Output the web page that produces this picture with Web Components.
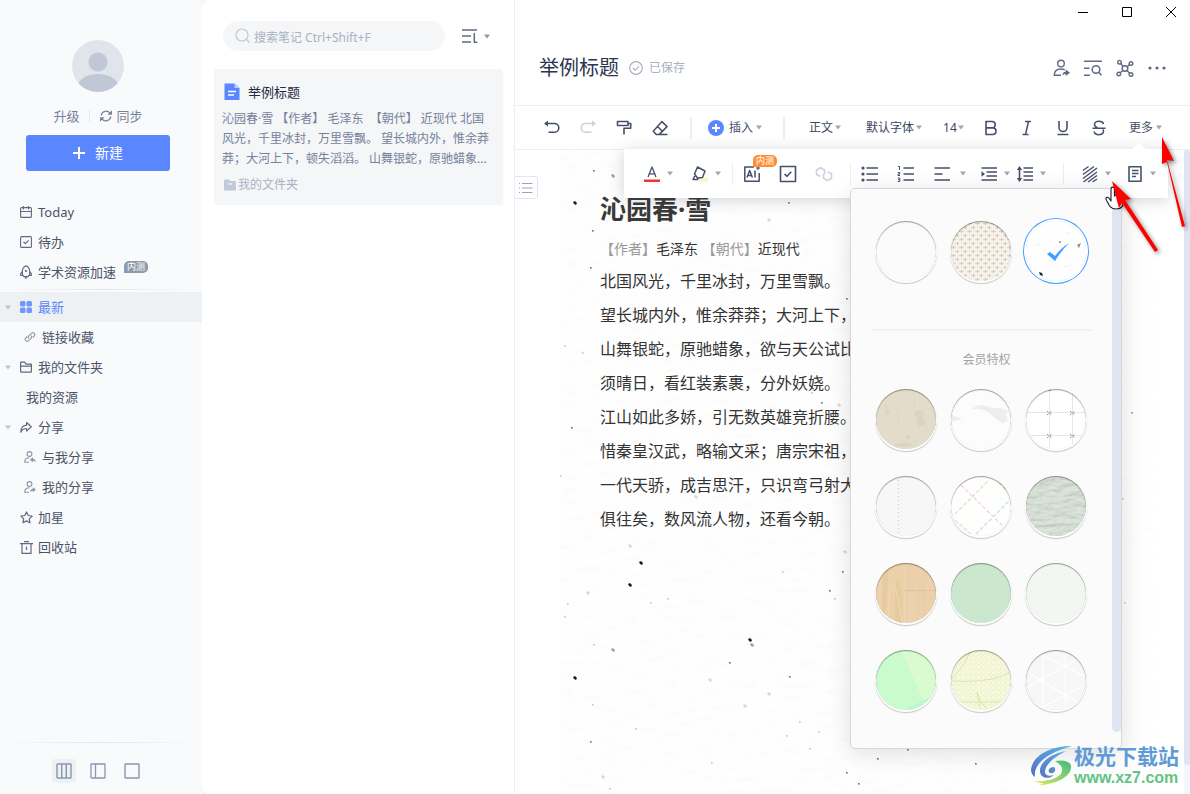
<!DOCTYPE html>
<html lang="zh-CN">
<head>
<meta charset="utf-8">
<title>举例标题</title>
<style>
  html, body { margin: 0; height: 100%; }
  body {
    font: 13px/20px "Noto Sans", "Noto Sans CJK SC", sans-serif;
    color: #4a5468;
    overflow: hidden;
  }
</style>
</head>
<body>
<note-app></note-app>

<script>
const BASE = `<style>
  *, *::before { box-sizing: border-box; }
  button, input, select { font: inherit; color: inherit; background: none; border: 0; padding: 0; margin: 0; outline: 0; }
  button, select { cursor: pointer; appearance: none; }
  button { display: flex; align-items: center; justify-content: center; }
  a { color: inherit; text-decoration: none; }
  h1, h2, p, ul { margin: 0; padding: 0; font-weight: inherit; font-size: inherit; list-style: none; }
</style>`;

function define(name, markup, setup) {
  const template = document.createElement('template');
  template.innerHTML = BASE + markup;
  customElements.define(name, class extends HTMLElement {
    constructor() {
      super();
      this.attachShadow({ mode: 'open' }).append(template.content.cloneNode(true));
    }
    connectedCallback() { if (setup) setup(this, this.shadowRoot); }
  });
}

/* ---------- icons: [width, height, shapes] ---------- */
const line = (w, body) => `<g fill="none" stroke="currentColor" stroke-width="${w}" stroke-linejoin="round">${body}</g>`;
const ICONS = {
  caret: [6, 5, '<path fill="currentColor" d="M0 0.5h6L3 4.5z"/>'],
  plus: [12, 12, line(2, '<path d="M6 0v12M0 6h12"/>')],
  sync: [14, 14, line(1.3, '<path d="M2.200 6.500A4.900 4.900 0 0 1 11 4.200M11.800 7.500A4.900 4.900 0 0 1 3 9.800"/>') + '<path fill="currentColor" d="M8.500 5.800h4.500V1.300zM5.500 8.200H1v4.500z"/>'],
  calendar: [12, 12, line(1.1, '<rect x=".6" y="1.6" width="10.800" height="9.800" rx="1"/><path d="M.6 5.500h10.800M3.500 0v3.500M8.500 0v3.500"/>')],
  todo: [12, 12, line(1.1, '<rect x=".6" y=".6" width="10.800" height="10.800" rx="1"/><path d="M3.500 6l1.800 1.700L8.700 4.300"/>')],
  rocket: [12, 14, line(1.2, '<path d="M6 .8C3.500 2 2.300 4 2.300 6.500v3L4 11.700h4l1.700-2.200v-3C9.700 4 8.500 2 6 .8zM2.300 6.500L.7 8.500v2h2.300M9.700 6.500l1.600 2v2H9M4.700 13h2.600"/>') + '<circle cx="6" cy="6" r="1.100" fill="currentColor"/>'],
  grid: [12, 12, '<g fill="currentColor"><rect width="5.500" height="5.500" rx="1.500"/><rect x="6.500" width="5.500" height="5.500" rx="1.500"/><rect y="6.500" width="5.500" height="5.500" rx="1.500"/><rect x="6.500" y="6.500" width="5.500" height="5.500" rx="1.500"/></g>'],
  link: [12, 12, line(1.1, '<path d="M5 7.500a2 2 0 0 1 0-2.800l2.600-2.600a2 2 0 0 1 2.800 2.800L8.800 6.500M7 4.500a2 2 0 0 1 0 2.800L4.400 9.900a2 2 0 0 1-2.800-2.800L3.200 5.500"/>')],
  folder: [12, 12, line(1.2, '<path d="M.6 10.400V1.200h4l1.400 2h5.400v7.200c0 .5-.3.800-.8.800H1.400c-.5 0-.8-.3-.8-.8zM1 5.200h10"/>')],
  share: [12, 12, line(1.2, '<path d="M.8 11.200C.8 6.500 3.500 4.200 6.600 4.200V1.500l4.700 4.300-4.700 4.300V7.500C4.200 7.500 2 8.600.8 11.200z"/>')],
  personIn: [12, 12, line(1.1, '<circle cx="5.500" cy="3" r="2.400"/><path d="M5 11.300H.7C.7 8.600 2.500 6.800 5.500 6.800"/>') + '<path fill="currentColor" d="M9 6.200L5.800 8.700 9 11.200V9.700c1.200 0 2 .5 2.800 1.600-.1-2-1.100-3.300-2.800-3.500z"/>'],
  personOut: [12, 12, line(1.1, '<circle cx="5.500" cy="3" r="2.400"/><path d="M5 11.300H.7C.7 8.600 2.500 6.800 5.500 6.800"/>') + '<path fill="currentColor" d="M8.800 6.200L12 8.700l-3.200 2.500V9.700c-1.200 0-2 .5-2.800 1.600.1-2 1.100-3.300 2.800-3.500z"/>'],
  star: [13, 13, line(1.2, '<path d="M6.500.9l1.700 3.600 3.900.5-2.800 2.800.7 4-3.500-1.900-3.500 1.900.7-4L.9 5l3.900-.5z"/>')],
  trash: [13, 13, line(1.2, '<path d="M0 2.600h13M4 .6h5M2 2.600v9.800h9V2.600M6.500 5.500v3.500"/>')],
  cols3: [16, 16, line(1.4, '<rect x="1" y="1" width="14" height="14" rx=".5"/><path d="M5.700 1v14M10.300 1v14"/>')],
  cols2: [16, 16, line(1.3, '<rect x="1" y="1" width="14" height="14" rx=".5"/><path d="M5.500 1v14"/>')],
  cols1: [16, 16, line(1.4, '<rect x="1" y="1" width="14" height="14" rx=".5"/>')],
  search: [16, 16, line(1.2, '<circle cx="7" cy="7" r="6"/><path d="M11.500 11.500l3 3"/>')],
  sort: [16, 14, line(1.5, '<path d="M0 1h15M0 7h9M0 13h9M12.300 4v9.200h3"/>')],
  doc: [16, 18, '<path fill="#5a86ff" d="M0.500 0.500h10L15.500 5v12h-15z"/><path fill="#b9cbff" d="M10.500.5V5h5z"/><path stroke="#fff" stroke-width="1.400" d="M4 8.500h8M4 12h6"/>'],
  folderFill: [12, 12, '<path fill="currentColor" d="M1 .5h4L6 2h5a1 1 0 0 1 1 1v7.500a1 1 0 0 1-1 1H1a1 1 0 0 1-1-1v-9a1 1 0 0 1 1-1z"/><path stroke="#fff" d="M4 5h4"/>'],
  check: [14, 14, line(1.2, '<circle cx="7" cy="7" r="6.300"/><path d="M4 7l2.300 2.200L10 5.400"/>')],
  min: [12, 12, '<path stroke="#000" d="M1 6.500h10"/>'],
  max: [12, 12, '<path fill="none" stroke="#000" d="M1.500 1.500h9v9h-9z"/>'],
  close: [12, 12, '<path fill="none" stroke="#000" d="M1 1l10 10M11 1L1 11"/>'],
  shareUser: [20, 20, line(1.4, '<circle cx="10" cy="5.500" r="3.300"/><path d="M10 17.300H3.200c0-4 2.800-6.300 6.800-6.300 1.500 0 2.800.2 3.800 1"/>') + '<path fill="currentColor" d="M14.800 11.400l4.200 3.300-4.200 3.300v-2c-1.500 0-2.700.6-3.500 2 .1-2.800 1.300-4.300 3.500-4.600z"/>'],
  find: [20, 20, line(1.5, '<path d="M1 3.200h18M1 10.200h5.500M1 17.200h6"/><circle cx="13" cy="11.500" r="3.800"/><path d="M15.800 14.300l2.700 3"/>')],
  graph: [20, 20, line(1.4, '<circle cx="10" cy="10.500" r="2.800"/><circle cx="4.500" cy="4.200" r="1.800"/><circle cx="16" cy="5.500" r="1.800"/><circle cx="3.800" cy="16" r="1.800"/><circle cx="16" cy="16.500" r="1.800"/><path d="M5.700 5.500L8 8.400M14.400 6.600L12.300 8.700M5.200 14.700L7.800 12.400M14.600 15.200L12 12.400"/>')],
  dots: [20, 20, '<g fill="currentColor"><circle cx="3" cy="10" r="1.600"/><circle cx="10" cy="10" r="1.600"/><circle cx="17" cy="10" r="1.600"/></g>'],
  undo: [18, 18, line(1.5, '<path d="M3 4.500h8.500a4.300 4.300 0 0 1 0 8.700H5.500"/>') + '<path fill="currentColor" d="M1 4.500L5 1.500v6z"/>'],
  redo: [18, 18, line(1.5, '<path d="M15 4.500H6.500a4.300 4.300 0 0 0 0 8.700h6"/>') + '<path fill="currentColor" d="M17 4.500L13 1.500v6z"/>'],
  roller: [18, 18, line(1.6, '<path d="M2.500 2.500h10.500v4H2.500zM13 4.500h2.700v4.700H9V15.500"/>')],
  eraser: [18, 18, line(1.5, '<path d="M11 2.600l5 5-8 8H5.500l-3.300-3.300zM6.300 7.300l5 5M7 15.500h9.500"/>')],
  insert: [16, 16, '<circle cx="8" cy="8" r="8" fill="#5a86ff"/><path stroke="#fff" stroke-width="2" d="M8 4v8M4 8h8"/>'],
  bold: [18, 18, line(1.6, '<path d="M4 2.500h6a3.200 3.200 0 0 1 0 6.400H4zM4 8.900h6.700a3.300 3.300 0 0 1 0 6.600H4z"/>')],
  italic: [18, 18, line(1.5, '<path d="M7 2.500h6M4.500 15.500h6M10.500 2.500l-3 13"/>')],
  underline: [18, 18, line(1.6, '<path d="M5 2v6.500a4 4 0 0 0 8 0V2M3.500 15.500h11"/>')],
  strike: [18, 18, line(1.6, '<path d="M13.500 5C13 3.300 11.500 2.300 9 2.300S4.500 3.500 4.500 5.500c0 1.500 1 2.500 3 3.200M13 10.500c1.600 2.500-.3 5.200-4 5.200-2.800 0-4.600-1.200-4.800-3.200M2.500 9.200h13"/>')],
  color: [18, 18, line(1.3, '<path d="M5 12L9 2l4 10M6.400 8.800h5.200"/>') + '<path fill="#f03434" d="M1 14.500h16V17H1z"/>'],
  highlight: [18, 18, '<path fill="#fff0c4" d="M7 13h10v3.500H7z"/>' + line(1.5, '<path d="M6.500 2l7.500 4-2.500 6.500-5 .5L3.500 9zM4.500 9.500L2 14.500h4.500l1-2"/>')],
  ai: [18, 18, line(1.5, '<path d="M11 2H1.800v14.200h14.400V8M4 12.500l2.700-7 2.700 7M5 10.500h3.500M12 5.500v7"/>') + '<path stroke="currentColor" stroke-width="1.200" d="M15 1v4M13 3h4"/>'],
  checkbox: [18, 18, line(1.6, '<rect x="1.500" y="1.500" width="15" height="15"/><path d="M5.500 9l2.500 2.300 4.300-4.500"/>')],
  chain: [18, 18, line(1.6, '<path d="M5.500 11.300L1.500 9.500V5l4-2.200 4 2.200v4.500M12.500 6.800l4 2v4.500l-4 2.200-4-2.200V8.500"/>')],
  bullets: [18, 18, '<g fill="currentColor"><circle cx="2" cy="3" r="1.600"/><circle cx="2" cy="9" r="1.600"/><circle cx="2" cy="15" r="1.600"/></g>' + line(1.6, '<path d="M5.500 3H17M5.500 9H17M5.500 15H17"/>')],
  numbers: [18, 18, line(1.6, '<path d="M6.500 3H17M6.500 9H17M6.500 15H17"/>') + line(1, '<path d="M1 1.500h1.500V5M.8 7.500h2v1.500H1v1.500h2M.8 13h2v3.500h-2M1 14.700h1.500"/>')],
  align: [18, 18, line(1.6, '<path d="M1.500 3H17M1.500 9H9.500M1.500 15H17"/>')],
  indent: [18, 18, line(1.6, '<path d="M1.500 3H17M6.500 7H17M6.500 11H17M1.500 15H17"/>') + '<path fill="currentColor" d="M1.500 6.300v5.400L5 9z"/>'],
  lineHeight: [18, 18, line(1.6, '<path d="M7.500 3H17M7.500 7H17M7.500 11H17M7.500 15H17M3.500 3v12"/>') + '<path fill="currentColor" d="M3.500 1L.8 5h5.400zM3.500 17L.8 13h5.400z"/>'],
  hatch: [18, 18, line(1.4, '<path d="M2 5.500L7.500 1.500M2 9.500L13 1.500M2 13.500L16 3M2.500 17L16 7M7 17L16 10.500M11.500 17L16 14"/>')],
  page: [18, 18, line(1.6, '<path d="M3 1.800h12v14.400H3zM6 5.500h6.500M6 8.500h6.500M6 11.500h4"/>')],
  outline: [14, 12, line(1, '<path d="M3 1.500h10.500M3 6h10.500M3 10.500h10.500M0 1.500h1M0 6h1M0 10.500h1"/>')]
};
define('ui-icon', `<style>
  :host { display: inline-flex; flex: none; }
  svg { display: block; }
</style><svg aria-hidden="true"></svg>`, (host, root) => {
  const [w, h, body] = ICONS[host.getAttribute('name')];
  const svg = root.querySelector('svg');
  svg.setAttribute('width', w);
  svg.setAttribute('height', h);
  svg.setAttribute('viewBox', `0 0 ${w} ${h}`);
  svg.innerHTML = body;
});

/* ---------- sidebar ---------- */
define('nav-item', `<style>
  :host { display: block; }
  a { display: flex; align-items: center; height: 30px; padding-left: 5px; }
  .fold { width: 6px; margin-right: 9px; color: #bcc4d3; display: flex; }
  .icon { color: #5f6a80; width: 13px; display: flex; margin-right: 5px; }
  .icon:empty { display: none; }
  :host([child]) a { padding-left: 9px; }
  :host([child]) .icon { color: #8e97a8; }
  :host([plain]) .fold { margin-right: 15px; }
  :host([active]) { background: #eef1f4; color: #5a86ff; }
  :host([active]) .icon { color: #6f97ff; }
</style>
<a href="#"><span class="fold"></span><span class="icon"></span><slot></slot></a>`, (host, root) => {
  const put = (cls, name) => root.querySelector(cls).innerHTML = `<ui-icon name="${name}"></ui-icon>`;
  if (host.hasAttribute('fold')) put('.fold', 'caret');
  if (host.hasAttribute('icon')) put('.icon', host.getAttribute('icon'));
});

define('beta-badge', `<style>
  :host { display: block; padding: 0 3px; font-size: 9px; line-height: 12px; color: #fff;
          background: var(--badge, #8f99ac); border-radius: 5px 5px 5px 0; }
</style><slot></slot>`);

define('side-bar', `<style>
  :host { display: flex; flex-direction: column; background: #f9fafc; min-height: 0; }
  .user { padding: 40px 32px 0 26px; display: flex; flex-direction: column; }
  .avatar { align-self: center; }
  .links { display: flex; justify-content: center; align-items: center; color: #76819a; margin: 14px 0 9px; }
  .links a { display: flex; align-items: center; gap: 4px; }
  .links i { width: 1px; height: 12px; background: #e4e7ed; margin: 0 9px; }
  .new { height: 36px; background: #5a86ff; color: #fff; border-radius: 3px; font-size: 14px; gap: 10px; }
  nav { padding-top: 26px; }
  hr { border: 0; height: 1px; margin: 2px 0; background: linear-gradient(90deg, #f9fafc, #e1e5ee 50%, #f9fafc); }
  beta-badge { margin: 0 0 11px 8px; }
  .views { margin-top: auto; }
  .views div { display: flex; gap: 10px; padding: 14px 0 11px 52px; }
  .views button { width: 24px; height: 24px; border-radius: 3px; color: #8b96ae; }
  .views .on { background: #eef1f4; }
</style>
<div class="user">
  <svg class="avatar" width="52" height="52" viewBox="0 0 52 52" role="img" aria-label="头像">
    <defs><clipPath id="c"><circle cx="26" cy="26" r="26"/></clipPath></defs>
    <g clip-path="url(#c)"><path fill="#e0e4eb" d="M0 0h52v52H0z"/><circle cx="26" cy="22" r="9.500" fill="#c0c7d5"/><path fill="#c0c7d5" d="M6 44c3-6.500 11-10 20-10s17 3.500 20 10v9H6z"/></g>
  </svg>
  <div class="links"><a href="#">升级</a><i></i><a href="#"><ui-icon name="sync"></ui-icon>同步</a></div>
  <button class="new"><ui-icon name="plus"></ui-icon>新建</button>
</div>
<nav>
  <nav-item icon="calendar">Today</nav-item>
  <nav-item icon="todo">待办</nav-item>
  <nav-item icon="rocket">学术资源加速<beta-badge>内测</beta-badge></nav-item>
  <hr>
  <nav-item icon="grid" fold active>最新</nav-item>
  <nav-item icon="link" child>链接收藏</nav-item>
  <nav-item icon="folder" fold>我的文件夹</nav-item>
  <nav-item plain>我的资源</nav-item>
  <nav-item icon="share" fold>分享</nav-item>
  <nav-item icon="personIn" child>与我分享</nav-item>
  <nav-item icon="personOut" child>我的分享</nav-item>
  <nav-item icon="star">加星</nav-item>
  <nav-item icon="trash">回收站</nav-item>
</nav>
<div class="views"><hr><div>
  <button class="on" aria-label="三栏"><ui-icon name="cols3"></ui-icon></button>
  <button aria-label="两栏"><ui-icon name="cols2"></ui-icon></button>
  <button aria-label="单栏"><ui-icon name="cols1"></ui-icon></button>
</div></div>`);

/* ---------- note list ---------- */
define('note-card', `<style>
  :host { display: block; background: #f4f6f8; border-radius: 3px; padding: 13px 8px 10px; }
  h2 { display: flex; align-items: center; gap: 8px; height: 20px; padding-left: 2px; color: #1f2a44; }
  p { margin: 7px 0 6px; font-size: 12px; color: #76819a; }
  footer { display: flex; align-items: center; gap: 2px; font-size: 12px; color: #a9b1c2; padding-left: 2px; }
  ui-icon[name=folderFill] { color: #c2c9d8; }
</style>
<article>
  <h2><ui-icon name="doc"></ui-icon><slot name="title"></slot></h2>
  <p><slot></slot></p>
  <footer><ui-icon name="folderFill"></ui-icon><slot name="folder"></slot></footer>
</article>`);

define('note-list', `<style>
  :host { display: block; background: #fff; border-radius: 8px 0 0 8px; border-right: 1px solid #eceff5; padding: 21px 11px 0 12px; }
  header { display: flex; align-items: center; padding: 0 13px 0 9px; margin-bottom: 18px; }
  .search { display: flex; align-items: center; gap: 3px; flex: 1; min-width: 0; height: 30px; padding: 0 12px; background: #f4f6f8; border-radius: 15px; color: #c0c7d5; }
  input { flex: 1; min-width: 0; font-size: 12px; height: 22px; padding-top: 2px; }
  input::placeholder { color: #a9b1c2; opacity: 1; }
  .sort { gap: 6px; margin-left: 17px; color: #5f6a85; }
  .sort ui-icon + ui-icon { color: #8e97a8; }
</style>
<header>
  <label class="search"><ui-icon name="search"></ui-icon><input type="search" aria-label="搜索笔记" placeholder="搜索笔记 Ctrl+Shift+F"></label>
  <button class="sort" aria-label="排序"><ui-icon name="sort"></ui-icon><ui-icon name="caret"></ui-icon></button>
</header>
<note-card>
  <span slot="title">举例标题</span>
  沁园春·雪 【作者】 毛泽东 &nbsp;【朝代】 近现代 北国风光，千里冰封，万里雪飘。 望长城内外，惟余莽莽；大河上下，顿失滔滔。 山舞银蛇，原驰蜡象...
  <span slot="folder">我的文件夹</span>
</note-card>`);

/* ---------- toolbar pieces ---------- */
define('tool-button', `<style>
  :host { display: block; color: #46506a; font-size: 12px; }
  button { gap: var(--caret-gap, 6px); height: 20px; }
  span { display: flex; align-items: center; gap: 5px; }
  .caret { color: #a3a6ad; }
  :host([off]) { color: #ccd1da; }
</style>
<button><span class="face"><slot></slot></span></button>`, (host, root) => {
  const icon = host.getAttribute('icon');
  if (icon) root.querySelector('.face').insertAdjacentHTML('afterbegin', `<ui-icon name="${icon}"></ui-icon>`);
  if (host.hasAttribute('menu')) root.querySelector('button').insertAdjacentHTML('beforeend', '<ui-icon class="caret" name="caret"></ui-icon>');
  const label = host.getAttribute('label');
  if (label) root.querySelector('button').setAttribute('aria-label', label);
});

define('tool-select', `<style>
  :host { display: block; font-size: 12px; color: #3c465e; }
  label { display: flex; align-items: center; gap: 1px; height: 20px; }
  ui-icon { color: #a3a6ad; }
</style>
<label><select><option></option></select><ui-icon name="caret"></ui-icon></label>`, (host, root) => {
  root.querySelector('option').textContent = host.getAttribute('value');
  root.querySelector('select').setAttribute('aria-label', host.getAttribute('label'));
});

define('main-toolbar', `<style>
  :host { display: flex; align-items: center; padding-left: 28px; border-bottom: 1px solid #eceef2; --caret-gap: 3px; }
  .group { display: flex; align-items: center; gap: 18px; height: 22px; }
  .insert { padding: 0 21px 0 16px; margin-left: 21px; border: solid #f1ecf1; border-width: 0 2px; }
  .text { padding-left: 24px; }
  .style { margin-right: 7px; }
  .font { margin-right: 3px; }
  .more { margin-left: 3px; }
</style>
<div class="group">
  <tool-button icon="undo" label="撤销"></tool-button>
  <tool-button icon="redo" label="重做" off></tool-button>
  <tool-button icon="roller" label="格式刷"></tool-button>
  <tool-button icon="eraser" label="清除格式"></tool-button>
</div>
<div class="group insert"><tool-button icon="insert" menu>插入</tool-button></div>
<div class="group text">
  <tool-select class="style" label="段落样式" value="正文"></tool-select>
  <tool-select class="font" label="字体" value="默认字体"></tool-select>
  <tool-select label="字号" value="14"></tool-select>
  <tool-button icon="bold" label="加粗"></tool-button>
  <tool-button icon="italic" label="斜体"></tool-button>
  <tool-button icon="underline" label="下划线"></tool-button>
  <tool-button icon="strike" label="删除线"></tool-button>
  <tool-button class="more" menu>更多</tool-button>
</div>`);

define('more-toolbar', `<style>
  :host { display: flex; align-items: center; height: 49px; background: #fff; box-shadow: 0 2px 14px rgba(40, 60, 80, .22); }
  :host::before { content: ""; position: absolute; right: 22px; top: -6px; border: solid transparent; border-width: 0 7px 6px; border-bottom-color: #fff; }
  .group { display: flex; align-items: center; gap: 18px; height: 22px; padding: 0 17px 0 10px; border-right: 1px solid #eceef2; }
  .colors { padding: 0 11px 0 19px; }
  .page { padding: 0 14px 0 17px; gap: 15px; border: 0; }
  .tight { display: flex; gap: 6px; margin-left: -4px; }
  .ai { position: relative; }
  .ai beta-badge { position: absolute; left: 10px; bottom: 17px; --badge: #ff8f33; white-space: nowrap; }
</style>
<div class="group colors">
  <tool-button icon="color" label="文字颜色" menu></tool-button>
  <tool-button icon="highlight" label="高亮" menu></tool-button>
</div>
<div class="group">
  <div class="ai"><tool-button icon="ai" label="AI"></tool-button><beta-badge>内测</beta-badge></div>
  <tool-button icon="checkbox" label="待办"></tool-button>
  <tool-button icon="chain" label="链接" off></tool-button>
</div>
<div class="group">
  <tool-button icon="bullets" label="无序列表"></tool-button>
  <tool-button icon="numbers" label="有序列表"></tool-button>
  <tool-button icon="align" label="对齐" menu style="--caret-gap: 9px"></tool-button>
  <div class="tight">
    <tool-button icon="indent" label="缩进" menu></tool-button>
    <tool-button icon="lineHeight" label="行距" menu></tool-button>
  </div>
</div>
<div class="group page">
  <tool-button icon="hatch" label="背景" menu></tool-button>
  <tool-button icon="page" label="页面" menu></tool-button>
</div>`);

/* ---------- background picker ---------- */
const SWATCHES = {
  none: ['无', '<path fill="#fbfbfb" d="M0 0h60v60H0z"/>'],
  weave: ['编织', '<defs><pattern id="w" width="8" height="8" patternUnits="userSpaceOnUse"><path fill="#f5f0e8" d="M0 0h8v8H0z"/><path stroke="#ddd3c6" d="M0 2.500h5M4 6.500h5"/><path stroke="#d2c6b6" d="M2.500 1v3M6.500 5v3"/></pattern></defs><path fill="url(#w)" d="M0 0h60v60H0z"/>'],
  speckle: ['斑点纸', '<path fill="#fefefe" d="M0 0h60v60H0z"/><g fill="#8f8a78"><circle cx="34" cy="21" r="1"/><path d="M51 24l4-2-2 5z"/></g><path fill="#222" d="M13 51l3 1 1 3-3-1z"/><path fill="none" stroke="#f3f1ea" d="M10 24h6M22 40h8M38 46l8-2M40 12h5"/><path fill="#409eff" d="M21 33l3-2 5 4Q35 27 43 22q-8 8-14 18z"/>'],
  kraft: ['牛皮纸', '<path fill="#e3dccb" d="M0 0h60v60H0z"/><g fill="#d1c7ae" opacity=".4"><ellipse cx="43" cy="25" rx="5" ry="4"/><ellipse cx="45" cy="33" rx="4" ry="5"/><circle cx="32" cy="48" r="2"/><circle cx="12" cy="22" r="2"/><ellipse cx="27" cy="56" rx="9" ry="2"/></g><path stroke="#dad0ba" stroke-opacity=".6" fill="none" d="M10 15v12M22 20v18M38 8v12M50 34v10"/>'],
  ink: ['水墨', '<path fill="#fcfcfc" d="M0 0h60v60H0z"/><path fill="#eee" d="M21 20q8-6 14-3 8 3 14 2l9 3-3 3 2 7-6 2-7-5q-8-8-15-9zM0 26l12 4-10 2-2 3z"/>'],
  grid: ['方格', '<path fill="#fff" d="M0 0h60v60H0z"/><path stroke="#e6e6e6" d="M23.500 0v60M46.500 0v60M0 23.500h60M0 46.500h60"/><g stroke="#777" stroke-dasharray="1 1"><path d="M21 22l5 4M21 26l5-4M44 22l5 4M44 26l5-4M21 45l5 4M21 49l5-4M44 45l5 4M44 49l5-4M22 1h4"/></g>'],
  margin: ['边线', '<path fill="#f7f7f7" d="M0 0h60v60H0z"/><path stroke="#ccc" stroke-dasharray="1 3" d="M22.500 0v60"/>'],
  lattice: ['斜格', '<path fill="#fefefc" d="M0 0h60v60H0z"/><g fill="none" stroke-dasharray="4 2" stroke-width="1.300"><path stroke="#dedede" d="M4 38L38 4M4 44l16 14"/><path stroke="#f3d3ee" d="M10 9l44 43"/><path stroke="#bfe0f5" d="M25 58L59 24"/><path stroke="#e6c9b4" d="M48 6l8 9"/></g>'],
  green: ['绿纹', '<defs><filter id="g"><feTurbulence type="fractalNoise" baseFrequency=".07 .2" numOctaves="3" seed="4"/><feDiffuseLighting surfaceScale="1.100" diffuseConstant="1.120" lighting-color="#d6dfd4"><feDistantLight azimuth="230" elevation="62"/></feDiffuseLighting></filter></defs><path filter="url(#g)" d="M0 0h60v60H0z"/>'],
  wood: ['木纹', '<path fill="#ebd0ab" d="M0 0h60v60H0z"/><path fill="#e8ca9f" d="M8 0h5L9 60H5zM19 30Q20 0 26 30v30h-7zM46 28h3v32h-3z"/><g fill="none" stroke="#efd8b7"><path d="M12 60Q14-20 26 60M38 27Q45 5 52 27M34 28v32M38 30v30M47 30v30M4 10v40M29 4v56"/></g><path stroke="#e3c498" d="M28 27.500h32"/>'],
  mint: ['薄荷', '<path fill="#cbe8cf" d="M0 0h60v60H0z"/>'],
  pale: ['浅绿', '<path fill="#f2f8f1" d="M0 0h60v60H0z"/>'],
  fold: ['折纸', '<path fill="#c9fbcd" d="M0 0h60v60H0z"/><path fill="#dafbd0" d="M25 0h35v46l-13 4z"/><path fill="#bdf6d4" d="M28 60l32-16v16z"/>'],
  leaf: ['叶脉', '<defs><pattern id="l" width="5" height="5" patternUnits="userSpaceOnUse"><path fill="none" stroke="#eaeec6" stroke-width=".6" d="M0 2l2-2 3 2-1 3-3-1zM2 0v-1M4 5l1-1"/></pattern></defs><path fill="#f7fadf" d="M0 0h60v60H0z"/><path fill="url(#l)" d="M0 0h60v60H0z"/><path fill="none" stroke="#d3e2a4" d="M0 30Q14 15 19 2M0 31q45 2 60-10M26 42l3 16M26 42q3 12 10 16M0 52h50" stroke-width=".8"/>'],
  cube: ['几何', '<path fill="#f7f7f7" d="M0 0h60v60H0z"/><path fill="none" stroke="#fff" stroke-width="1.300" d="M16.500 0v60M39.500 0v60M0 38l39-22 21 11M0 21l39 24 21-11M16 58l23-13 21 12M16 5l23 11L60 4"/><circle cx="16.500" cy="30" r="2.500" fill="#fff"/>']
};
define('background-picker', `<style>
  :host { display: flex; background: #fbfbfb; border: 1px solid #d5d7da; border-radius: 5px; box-shadow: 0 4px 24px rgba(0, 0, 0, .12); }
  form { flex: 1; padding: 32px 20px 38px 21px; }
  .row { display: grid; grid-template-columns: repeat(3, 60px); gap: 27px 15px; padding-left: 4px; }
  label { position: relative; display: block; width: 60px; height: 60px; border-radius: 50%; box-shadow: 0 1px 0 1px #fff, 0 2px 1px 1px #c4c4c4; }
  label::after { content: ""; position: absolute; inset: 0; border-radius: 50%; box-shadow: inset 0 1px 1px rgba(0, 0, 0, .4); pointer-events: none; }
  svg { display: block; border-radius: 50%; }
  input { position: absolute; inset: 0; width: 60px; height: 60px; appearance: none; border-radius: 50%; }
  label:has(:checked) { box-shadow: 0 0 0 2px #fff, 0 0 0 3px #409eff; }
  label:has(:checked)::after { box-shadow: none; }
  hr { border: 0; height: 2px; background: #f2f2f2; margin: 48px 0 19px; }
  h2 { font-size: 12px; color: #a3a3a3; text-align: center; padding-left: 9px; margin-bottom: 19px; }
  .bar { width: 9px; margin-bottom: 16px; background: #e0e3f2; border-radius: 0 0 5px 5px; }
</style>
<form>
  <div class="row" data-keys="none weave speckle"></div>
  <hr>
  <h2>会员特权</h2>
  <div class="row" data-keys="kraft ink grid margin lattice green wood mint pale fold leaf cube"></div>
</form>
<div class="bar"></div>`, (host, root) => {
  for (const row of root.querySelectorAll('.row')) {
    row.innerHTML = row.dataset.keys.split(' ').map(key => {
      const [label, art] = SWATCHES[key];
      return `<label><input type="radio" name="bg" aria-label="${label}"${key === 'speckle' ? ' checked' : ''}><svg width="60" height="60" viewBox="0 0 60 60">${art}</svg></label>`;
    }).join('');
  }
});

/* ---------- paper with ink specks ---------- */
define('speckled-paper', `<style>
  :host { display: block; overflow: hidden; -webkit-mask: linear-gradient(90deg, #000 92%, transparent); mask: linear-gradient(90deg, #000 92%, transparent); }
  svg { display: block; width: 100%; height: 100%; }
</style>
<svg aria-hidden="true">
  <defs><filter id="fiber" x="0" y="0" width="100%" height="100%">
    <feTurbulence type="fractalNoise" baseFrequency=".05 .18" numOctaves="3" seed="7"/>
    <feColorMatrix values="0 0 0 0 .8  0 0 0 0 .78  0 0 0 0 .72  0 0 0 1.600 -.82"/>
  </filter></defs>
  <rect width="100%" height="100%" fill="#fefefe"/>
  <rect width="100%" height="100%" filter="url(#fiber)" opacity=".22"/>
  <g id="dots"></g>
</svg>`, (host, root) => {
  const black = [[15,53],[81,413],[70,435],[190,490],[15,528]];
  const grey = [[34,21],[33,81],[31,118],[287,149],[12,278],[229,53],[262,253],[270,441],[283,422],[170,513],[230,527],[31,592],[287,623],[299,634],[348,600],[318,609],[572,263],[416,614]];
  const faint = [[5,196],[23,203],[1,326],[252,243],[91,453],[108,449],[223,422],[275,449],[34,495],[33,555],[76,579],[152,613],[259,582],[227,586],[250,599],[50,639],[563,349],[565,453],[240,572],[5,467],[8,454]];
  const olive = [[53,26],[53,500],[192,495]];
  const paleOlive = [[209,70],[136,347],[279,255],[28,443],[209,544],[150,530],[43,627],[70,396],[285,402],[185,556]];
  const draw = (list, size, fill, tilt) => list.map(([x, y]) =>
    `<path fill="${fill}" d="M${x - size} ${y - size + tilt}l${size} -${tilt} ${size} ${size} -1 ${size} -${size} -1z"/>`).join('');
  root.querySelector('#dots').innerHTML =
    draw(black, 2, '#1d1d1d', 1) + draw(grey, 1, '#666', 0) + draw(faint, 1, '#c4c4c4', 0) +
    draw(olive, 2, '#aaa27e', 1) + draw(paleOlive, 2, '#dedac8', 1);
});

/* ---------- document ---------- */
define('poem-page', `<style>
  :host { display: block; position: relative; flex: 1; min-height: 0; overflow: hidden; }
  speckled-paper { position: absolute; inset: 0 20px 0 45px; }
  article { position: relative; padding: 40px 90px 0 85px; color: #333; }
  h1 { font-size: 26px; line-height: 38px; font-weight: 700; color: #3a3a3a; }
  .meta { font-size: 14px; line-height: 20px; margin: 11px 0 5px; white-space: pre; }
  .meta span { color: #999; }
  .line { font-size: 16px; line-height: 34px; }
  .outline { position: absolute; left: -1px; top: 26px; width: 24px; height: 23px; background: #fff; border: 1px solid #dfe4ee; border-radius: 0 3px 3px 0; color: #9aa3b5; }
  .scroll { position: absolute; right: 0; top: 0; bottom: 0; width: 6px; background: #f5f6fa; }
  .scroll::before { content: ""; display: block; height: calc(100% - 29px); background: #e0e3f2; border-radius: 3px; }
</style>
<speckled-paper></speckled-paper>
<article>
  <h1>沁园春·雪</h1>
  <p class="meta"><span>【作者】</span>毛泽东 <span>【朝代】</span>近现代</p>
  <p class="line">北国风光，千里冰封，万里雪飘。</p>
  <p class="line">望长城内外，惟余莽莽；大河上下，</p>
  <p class="line">山舞银蛇，原驰蜡象，欲与天公试比</p>
  <p class="line">须晴日，看红装素裹，分外妖娆。</p>
  <p class="line">江山如此多娇，引无数英雄竞折腰。</p>
  <p class="line">惜秦皇汉武，略输文采；唐宗宋祖，</p>
  <p class="line">一代天骄，成吉思汗，只识弯弓射大</p>
  <p class="line">俱往矣，数风流人物，还看今朝。</p>
</article>
<button class="outline" aria-label="大纲"><ui-icon name="outline"></ui-icon></button>
<div class="scroll"></div>`);

define('site-mark', `<style>
  :host { display: flex; align-items: center; gap: 2px; }
  b { display: block; font: 700 21px/22px "Noto Sans CJK SC", sans-serif; color: #5f9bd6; }
  span { display: block; margin-top: 3px; font: 700 16px/18px "Liberation Sans", sans-serif; color: #62c482; }
</style>
<svg width="42" height="42" viewBox="0 0 42 42" aria-hidden="true">
  <defs>
    <linearGradient id="b" x1="0" y1="1" x2="1" y2="0"><stop offset="0" stop-color="#5a6fc0"/><stop offset="1" stop-color="#55b8ea"/></linearGradient>
    <linearGradient id="g" x1="0" y1="1" x2="1" y2="0"><stop offset="0" stop-color="#e3e85a"/><stop offset="1" stop-color="#3dbb83"/></linearGradient>
  </defs>
  <path fill="url(#b)" d="M42 1C20 1 2 11 1 25c0 3 2 6 4 7C3 20 16 8 42 1zM36 6C20 9 9 18 10 27c1 6 8 8 14 3-5 2-9 0-9-3 0-7 9-15 21-21zM24 22c-5 0-7 4-4 6 4 1 7-3 4-6z"/>
  <path fill="url(#g)" d="M25 16c10-2 17 1 16 7-1 9-16 17-33 17 12-2 23-7 24-14 1-5-3-7-7-10zM4 36c10 1 20-1 26-6-5 8-16 11-26 6z"/>
</svg>
<div><b>极光下载站</b><span>www.xz7.com</span></div>`);

define('pointer-arrows', `<style>:host { display: block; pointer-events: none; } svg { display: block; } .shadow { filter: drop-shadow(2px 2px 2px rgba(0, 0, 0, .45)); }</style>
<svg width="90" height="130" viewBox="1100 130 90 130" aria-hidden="true">
  <path fill="#fff" stroke="#1a1a2a" stroke-width="1.100" stroke-linejoin="round" d="M1111 201v-12c0-2.500 3.500-2.500 3.500 0v7c.5-1.500 3-1.500 3.500.5.500-1.500 3-1 3.500.5 1.500-.5 2.500.5 2.500 2 0 6-2 10-7.500 10-6 0-7.500-3.500-9-7-1.500-2-2-3.500-1-4.500 1.500-1 3 1 4.500 3.500z"/>
  <g fill="#f00" class="shadow">
    <path d="M1162 137l12 24-7-1 18 66-3 1-15-65-5 2z"/>
    <path d="M1112 181l19 18-6 1 33 50-3 2-33-49-3 5z"/>
  </g>
</svg>`);

define('note-editor', `<style>
  :host { position: relative; display: flex; flex-direction: column; background: #fff; min-width: 0; min-height: 0; }
  .window { display: flex; justify-content: flex-end; gap: 6px; }
  .window button { width: 38px; height: 24px; }
  header { display: flex; align-items: center; height: 36px; margin: 26px 23px 19px 24px; gap: 10px; }
  h1 { font-size: 20px; line-height: 28px; color: #2c3650; }
  .saved { display: flex; align-items: center; gap: 6px; font-size: 12px; color: #a9b1c2; }
  .tools { display: flex; gap: 12px; margin-left: auto; color: #5f6a85; }
  main-toolbar { border-top: 1px solid #eceef2; height: 45px; }
  more-toolbar { position: absolute; right: 22px; top: 149px; width: 544px; }
  background-picker { position: absolute; right: 68px; top: 188px; width: 272px; }
  pointer-arrows { position: absolute; right: 0; top: 130px; }
  site-mark { position: absolute; right: 11px; bottom: 7px; }
</style>
<div class="window">
  <button aria-label="最小化"><ui-icon name="min"></ui-icon></button>
  <button aria-label="最大化"><ui-icon name="max"></ui-icon></button>
  <button aria-label="关闭"><ui-icon name="close"></ui-icon></button>
</div>
<header>
  <h1>举例标题</h1>
  <span class="saved"><ui-icon name="check"></ui-icon>已保存</span>
  <div class="tools">
    <button aria-label="分享"><ui-icon name="shareUser"></ui-icon></button>
    <button aria-label="查找"><ui-icon name="find"></ui-icon></button>
    <button aria-label="导图"><ui-icon name="graph"></ui-icon></button>
    <button aria-label="更多"><ui-icon name="dots"></ui-icon></button>
  </div>
</header>
<main-toolbar></main-toolbar>
<poem-page></poem-page>
<more-toolbar></more-toolbar>
<background-picker></background-picker>
<pointer-arrows></pointer-arrows>
<site-mark></site-mark>`);

define('note-app', `<style>
  :host { display: grid; grid-template-columns: 202px 313px minmax(0, 1fr); grid-template-rows: minmax(0, 1fr); height: 100vh; background: #f4f6f9; }
</style>
<side-bar></side-bar><note-list></note-list><note-editor></note-editor>`);
</script>
</body>
</html>
